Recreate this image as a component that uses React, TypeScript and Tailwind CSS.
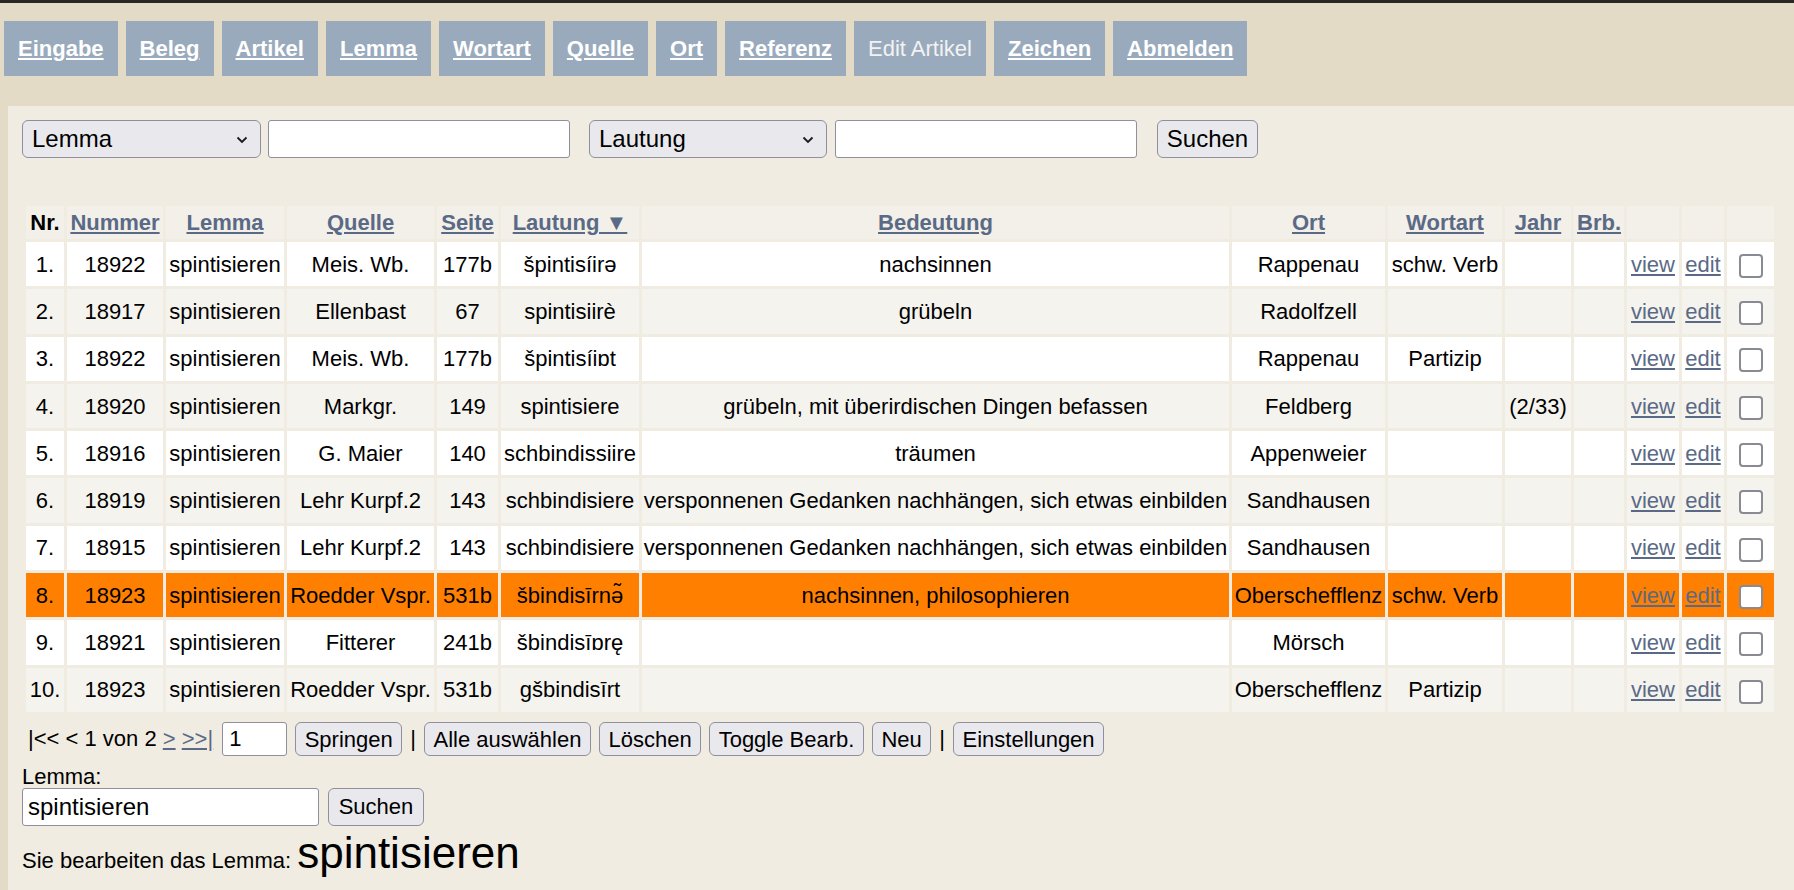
import { useState } from 'react';

type Row = {
  nummer: string;
  lemma: string;
  quelle: string;
  seite: string;
  lautung: string;
  bedeutung: string;
  ort: string;
  wortart: string;
  jahr: string;
};

const rows: Row[] = [
  { nummer: '18922', lemma: 'spintisieren', quelle: 'Meis. Wb.', seite: '177b', lautung: 'špintisíirə', bedeutung: 'nachsinnen', ort: 'Rappenau', wortart: 'schw. Verb', jahr: '' },
  { nummer: '18917', lemma: 'spintisieren', quelle: 'Ellenbast', seite: '67', lautung: 'spintisiirè', bedeutung: 'grübeln', ort: 'Radolfzell', wortart: '', jahr: '' },
  { nummer: '18922', lemma: 'spintisieren', quelle: 'Meis. Wb.', seite: '177b', lautung: 'špintisíiɒt', bedeutung: '', ort: 'Rappenau', wortart: 'Partizip', jahr: '' },
  { nummer: '18920', lemma: 'spintisieren', quelle: 'Markgr.', seite: '149', lautung: 'spintisiere', bedeutung: 'grübeln, mit überirdischen Dingen befassen', ort: 'Feldberg', wortart: '', jahr: '(2/33)' },
  { nummer: '18916', lemma: 'spintisieren', quelle: 'G. Maier', seite: '140', lautung: 'schbindissiire', bedeutung: 'träumen', ort: 'Appenweier', wortart: '', jahr: '' },
  { nummer: '18919', lemma: 'spintisieren', quelle: 'Lehr Kurpf.2', seite: '143', lautung: 'schbindisiere', bedeutung: 'versponnenen Gedanken nachhängen, sich etwas einbilden', ort: 'Sandhausen', wortart: '', jahr: '' },
  { nummer: '18915', lemma: 'spintisieren', quelle: 'Lehr Kurpf.2', seite: '143', lautung: 'schbindisiere', bedeutung: 'versponnenen Gedanken nachhängen, sich etwas einbilden', ort: 'Sandhausen', wortart: '', jahr: '' },
  { nummer: '18923', lemma: 'spintisieren', quelle: 'Roedder Vspr.', seite: '531b', lautung: 'šbindisīrnə̃', bedeutung: 'nachsinnen, philosophieren', ort: 'Oberschefflenz', wortart: 'schw. Verb', jahr: '' },
  { nummer: '18921', lemma: 'spintisieren', quelle: 'Fitterer', seite: '241b', lautung: 'šbindisīɒrę', bedeutung: '', ort: 'Mörsch', wortart: '', jahr: '' },
  { nummer: '18923', lemma: 'spintisieren', quelle: 'Roedder Vspr.', seite: '531b', lautung: 'gšbindisīrt', bedeutung: '', ort: 'Oberschefflenz', wortart: 'Partizip', jahr: '' },
];

const navItems = ['Eingabe', 'Beleg', 'Artikel', 'Lemma', 'Wortart', 'Quelle', 'Ort', 'Referenz', 'Edit Artikel', 'Zeichen', 'Abmelden'];

function SelectBox({ value, className }: { value: string; className: string }) {
  return (
    <div className={`relative h-[38px] ${className}`}>
      <select
        defaultValue={value}
        className="appearance-none w-full h-full pl-[9px] text-[24px] text-black bg-[#e9e9ed] border-[1.5px] border-[#8f8f9d] rounded-[6px]"
      >
        <option>{value}</option>
      </select>
      <svg
        className="absolute right-[13px] top-[16px] pointer-events-none"
        width="12"
        height="8"
        viewBox="0 0 12 8"
        fill="none"
      >
        <path d="M1.5 1.5 L6 6 L10.5 1.5" stroke="#1a1a1a" strokeWidth="1.8" />
      </svg>
    </div>
  );
}

function Checkbox() {
  return <span className="inline-block w-[24px] h-[24px] rounded-[4px] border-[2.5px] border-[#8a8a92] bg-white align-middle" />;
}

const btn = 'bg-[#e9e9ed] border-[1.5px] border-[#8f8f9d] rounded-[6px] text-black';
const pageBtn = `h-[34px] px-[8.5px] text-[22px] ${btn}`;

export default function App() {
  const [suche1, setSuche1] = useState('');
  const [suche2, setSuche2] = useState('');
  const [seite, setSeite] = useState('1');
  const [lemma, setLemma] = useState('spintisieren');
  const highlighted = 7;

  return (
    <div className="min-h-screen flex flex-col bg-[#e3dbc5] font-['Liberation_Sans',Arial,sans-serif] text-black">
      <div className="h-[3px] bg-[#2a2624]" />

      {/* Navigation */}
      <nav className="flex gap-[8px] pl-[4px] pt-[18px] pb-[30px]">
        {navItems.map((item) =>
          item === 'Edit Artikel' ? (
            <span key={item} className="h-[55px] px-[14px] flex items-center bg-[#99aabd] text-[22px] text-[#f2f2f2]">
              {item}
            </span>
          ) : (
            <a key={item} href="#" className="h-[55px] px-[14px] flex items-center bg-[#99aabd] text-[22px] font-bold text-white underline">
              {item}
            </a>
          )
        )}
      </nav>

      <div className="flex-1 ml-[8px] bg-[#f0ece1] pl-[14px] pt-[14px]">
        {/* Suche */}
        <div className="flex items-center">
          <SelectBox value="Lemma" className="w-[239px]" />
          <input
            value={suche1}
            onChange={(e) => setSuche1(e.target.value)}
            className="ml-[7px] w-[302px] h-[38px] bg-white border-[1.5px] border-[#8f8f9d] rounded-[3px] px-[6px] text-[24px]"
          />
          <SelectBox value="Lautung" className="ml-[19px] w-[238px]" />
          <input
            value={suche2}
            onChange={(e) => setSuche2(e.target.value)}
            className="ml-[8px] w-[302px] h-[38px] bg-white border-[1.5px] border-[#8f8f9d] rounded-[3px] px-[6px] text-[24px]"
          />
          <button className={`ml-[20px] w-[101px] h-[38px] text-[24px] ${btn}`}>Suchen</button>
        </div>

        {/* Tabelle */}
        <table className="table-fixed border-separate border-spacing-[3px] w-[1754px] mt-[45px] ml-[1px] text-[22px]">
          <colgroup>
            <col className="w-[38px]" />
            <col className="w-[96px]" />
            <col className="w-[118px]" />
            <col className="w-[147px]" />
            <col className="w-[61px]" />
            <col className="w-[138px]" />
            <col className="w-[587px]" />
            <col className="w-[153px]" />
            <col className="w-[114px]" />
            <col className="w-[66px]" />
            <col className="w-[50px]" />
            <col className="w-[52px]" />
            <col className="w-[42px]" />
            <col className="w-[47px]" />
          </colgroup>
          <thead>
            <tr>
              <th className="h-[33px] bg-[#f2f0e8] px-0 font-bold text-center">Nr.</th>
              {['Nummer', 'Lemma', 'Quelle', 'Seite', 'Lautung ▼', 'Bedeutung', 'Ort', 'Wortart', 'Jahr', 'Brb.'].map((h) => (
                <th key={h} className="h-[33px] bg-[#f2f0e8] px-0 font-bold text-center whitespace-nowrap">
                  <a href="#" className="text-[#5a6a86] underline">
                    {h}
                  </a>
                </th>
              ))}
              <th className="bg-[#f2f0e8]" />
              <th className="bg-[#f2f0e8]" />
              <th className="bg-[#f2f0e8]" />
            </tr>
          </thead>
          <tbody>
            {rows.map((r, i) => {
              const bg = i === highlighted ? 'bg-[#ff8000]' : i % 2 === 0 ? 'bg-white' : 'bg-[#f4f3ee]';
              const td = `h-[44.3px] px-0 text-center whitespace-nowrap ${bg}`;
              return (
                <tr key={i}>
                  <td className={td}>{i + 1}.</td>
                  <td className={td}>{r.nummer}</td>
                  <td className={td}>{r.lemma}</td>
                  <td className={td}>{r.quelle}</td>
                  <td className={td}>{r.seite}</td>
                  <td className={td}>{r.lautung}</td>
                  <td className={td}>{r.bedeutung}</td>
                  <td className={td}>{r.ort}</td>
                  <td className={td}>{r.wortart}</td>
                  <td className={td}>{r.jahr}</td>
                  <td className={td}></td>
                  <td className={td}>
                    <a href="#" className="text-[#5a6a86] underline">view</a>
                  </td>
                  <td className={td}>
                    <a href="#" className="text-[#5a6a86] underline">edit</a>
                  </td>
                  <td className={td}>
                    <Checkbox />
                  </td>
                </tr>
              );
            })}
          </tbody>
        </table>

        {/* Blättern */}
        <div className="mt-[7px] flex items-center gap-[8px] text-[22px]">
          <span className="pl-[6px] whitespace-pre">
            {'|<< < 1 von 2 '}
            <a href="#" className="text-[#5a6a86] underline">&gt;</a>{' '}
            <a href="#" className="text-[#5a6a86] underline">&gt;&gt;|</a>
          </span>
          <input
            value={seite}
            onChange={(e) => setSeite(e.target.value)}
            className="ml-[1px] w-[65px] h-[34px] bg-white border-[1.5px] border-[#8f8f9d] rounded-[3px] px-[6px] text-[22px]"
          />
          <button className={pageBtn}>Springen</button>
          <span>|</span>
          <button className={pageBtn}>Alle auswählen</button>
          <button className={pageBtn}>Löschen</button>
          <button className={pageBtn}>Toggle Bearb.</button>
          <button className={pageBtn}>Neu</button>
          <span>|</span>
          <button className={pageBtn}>Einstellungen</button>
        </div>

        {/* Lemma */}
        <div className="mt-[9px] text-[22px] leading-[23px]">Lemma:</div>
        <div className="flex items-center">
          <input
            value={lemma}
            onChange={(e) => setLemma(e.target.value)}
            className="w-[297px] h-[38px] bg-white border-[1.5px] border-[#8f8f9d] rounded-[3px] px-[5px] text-[24px]"
          />
          <button className={`ml-[9px] w-[96px] h-[38px] text-[22px] ${btn}`}>Suchen</button>
        </div>
        <div className="-mt-[6px] text-[22px]">
          Sie bearbeiten das Lemma: <span className="text-[44px]">spintisieren</span>
        </div>
      </div>
    </div>
  );
}
